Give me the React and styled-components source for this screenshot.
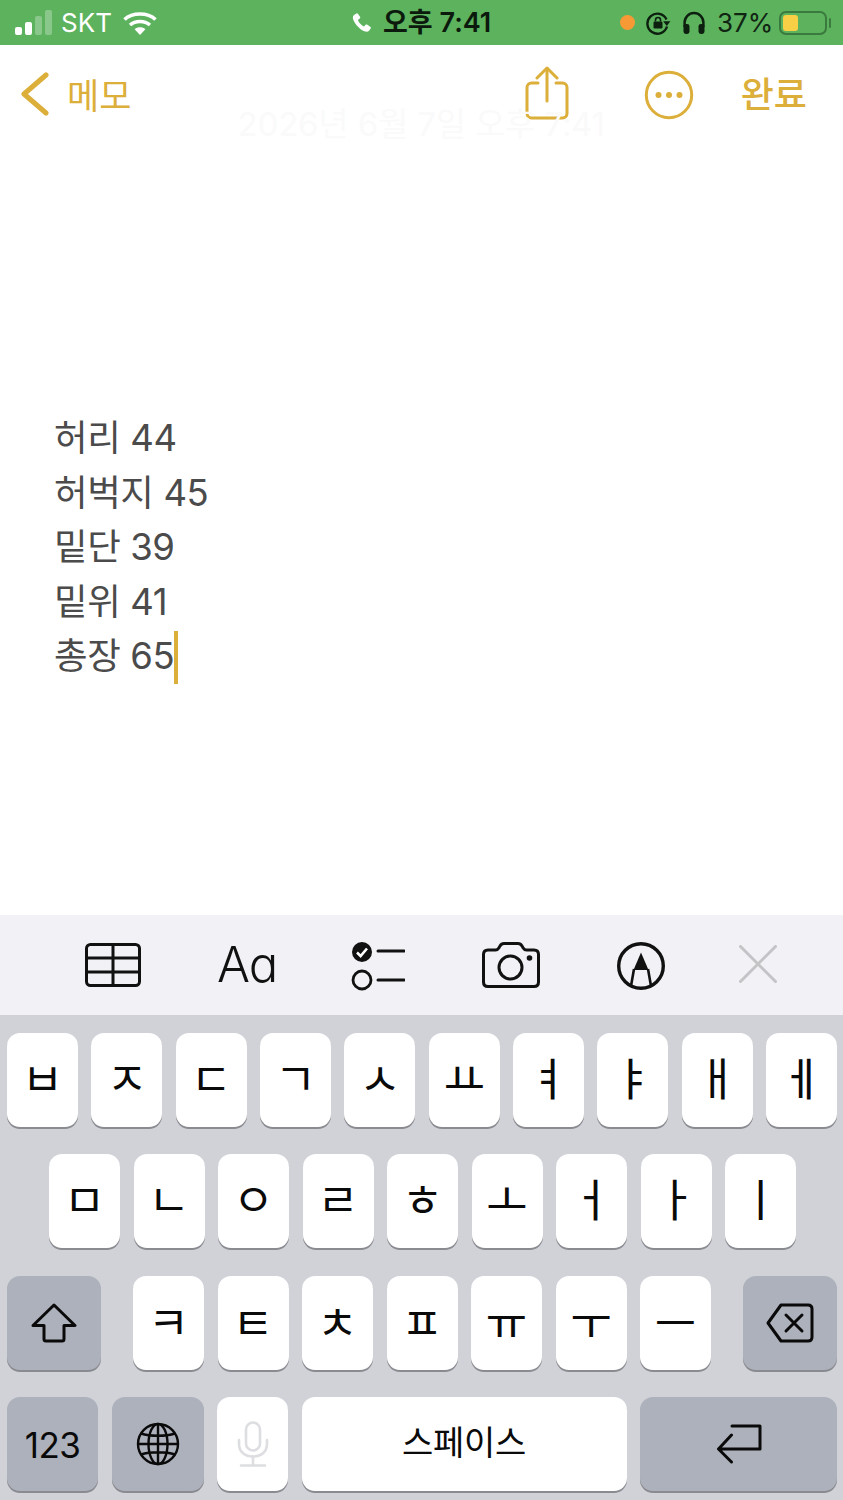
import React from "react";
import styled, { createGlobalStyle } from "styled-components";

const SANS = `Inter, "Noto Sans CJK KR", sans-serif`;
const GOLD = "#dcae3a";

const GlobalStyle = createGlobalStyle`
  html, body {
    margin: 0;
    padding: 0;
    background: #fff;
  }
`;

const Page = styled.div`
  width: 843px;
  height: 1500px;
  overflow: hidden;
  display: flex;
  flex-direction: column;
  font-family: ${SANS};
`;

const IconSvg = styled.svg`
  flex: none;
  margin-left: ${(p) => p.$ml ?? 0}px;
  margin-top: ${(p) => p.$mt ?? 0}px;
`;

/* status bar */
const StatusBar = styled.div`
  height: 45px;
  flex: none;
  box-sizing: border-box;
  padding-left: 15px;
  background: #5cb25d;
  display: grid;
  grid-template-columns: 336px 268px 1fr;
  align-items: center;
`;

const StatusGroup = styled.div`
  display: flex;
  align-items: center;
  gap: ${(p) => p.$gap}px;
`;

const Signal = styled.div`
  display: flex;
  align-items: flex-end;
  gap: 3px;
  height: 25px;
  margin-top: -1px;
`;

const SignalBar = styled.span`
  width: 7px;
  height: ${(p) => p.$h}px;
  border-radius: 2px;
  background: ${(p) => (p.$on ? "#ffffff" : "rgba(255,255,255,0.28)")};
`;

const Carrier = styled.span`
  font-size: 26px;
  color: #fff;
  line-height: 30px;
  margin-left: -2px;
`;

const Clock = styled.span`
  font-size: 27px;
  font-weight: 600;
  color: #0b1a0c;
  line-height: 30px;
  white-space: nowrap;
`;

const OrangeDot = styled.span`
  width: 15px;
  height: 15px;
  margin-left: 1px;
  border-radius: 50%;
  background: #f79a35;
`;

const Percent = styled.span`
  font-size: 26px;
  color: #102412;
  line-height: 30px;
`;

const Battery = styled.div`
  width: 48px;
  height: 24px;
  box-sizing: border-box;
  border: 2px solid #3b7a3e;
  border-radius: 7px;
  padding: 2px;
  margin-left: -5px;
  position: relative;

  &::after {
    content: "";
    position: absolute;
    right: -6px;
    top: 5px;
    width: 2px;
    height: 10px;
    border-radius: 1px;
    background: #3b7a3e;
  }
`;

const BatteryFill = styled.div`
  width: 15px;
  height: 100%;
  border-radius: 3px;
  background: #f9cf45;
`;

/* note area */
const Main = styled.div`
  height: 870px;
  flex: none;
  display: flex;
  flex-direction: column;
`;

const Nav = styled.div`
  height: 62px;
  flex: none;
  margin-top: 18px;
  box-sizing: border-box;
  padding: 0 36px 0 21px;
  display: flex;
  align-items: center;
`;

const BackText = styled.span`
  font-size: 35px;
  color: ${GOLD};
  margin-left: 16px;
  margin-top: 4px;
  line-height: 40px;
`;

const NavRight = styled.div`
  margin-left: auto;
  display: flex;
  align-items: center;
`;

const DoneText = styled.span`
  font-size: 36px;
  font-weight: 500;
  color: ${GOLD};
  line-height: 40px;
  margin-left: 47px;
  margin-top: 2px;
`;

const DateLine = styled.div`
  text-align: center;
  font-size: 32.7px;
  line-height: 36px;
  color: #fafafa;
  margin-top: -19px;
`;

const Note = styled.div`
  margin-top: 269px;
  padding-left: 54px;
`;

const NoteLine = styled.div`
  font-size: 36.5px;
  line-height: 54.6px;
  height: 54.6px;
  letter-spacing: -0.4px;
  color: #4b4b4b;
  white-space: nowrap;
`;

const Caret = styled.span`
  display: inline-block;
  width: 4px;
  height: 53px;
  vertical-align: -15px;
  background: ${GOLD};
`;

/* format toolbar */
const Toolbar = styled.div`
  height: 100px;
  flex: none;
  box-sizing: border-box;
  padding-left: 85px;
  background: #f2f2f6;
  display: flex;
  align-items: center;
`;

const FontButton = styled.span`
  font-size: 49px;
  font-weight: 300;
  line-height: 60px;
  width: 59px;
  margin-left: 76px;
  margin-right: 1px;
  letter-spacing: -1px;
  color: #111;
  font-feature-settings: "cv11";
  white-space: nowrap;
`;

/* keyboard */
const Keyboard = styled.div`
  flex: 1;
  box-sizing: border-box;
  padding: 18px 6px 0 7px;
  background: #d0d2d8;
  display: flex;
  flex-direction: column;
  gap: 27.3px;
`;

const KeyRow = styled.div`
  display: flex;
  gap: ${(p) => p.$gap ?? 13.35}px;
  padding-left: ${(p) => p.$inset ?? 0}px;
`;

const LetterGroup = styled.div`
  display: flex;
  gap: 13.5px;
  margin: 0 32px;
`;

const Key = styled.div`
  width: ${(p) => p.$w ?? 71}px;
  height: 94px;
  flex: none;
  border-radius: 13px;
  background: ${(p) => (p.$dark ? "#adb1bb" : "#ffffff")};
  box-shadow: 0 2px 0 #8a8b90;
  display: flex;
  align-items: center;
  justify-content: center;
  color: #0a0a0a;
  font-family: "Noto Sans CJK KR", sans-serif;
  line-height: 1;
`;

const Glyph = styled.span`
  font-size: 45px;
  margin-top: ${(p) => p.$mt ?? -8}px;
`;

const Digits = styled.span`
  font-family: ${SANS};
  font-size: 35px;
  font-weight: 400;
  letter-spacing: -0.5px;
  margin-top: 3px;
`;

const SpaceLabel = styled.span`
  font-size: 34px;
  letter-spacing: -0.3px;
  margin-top: -5px;
`;

const SignalIcon = () => (
  <Signal>
    <SignalBar $h={8} $on />
    <SignalBar $h={13} $on />
    <SignalBar $h={19} />
    <SignalBar $h={25} />
  </Signal>
);

const WifiIcon = () => (
  <IconSvg width="36" height="26" viewBox="0 0 36 26" $ml={-1}>
    <g fill="none" stroke="#fff" strokeWidth="3.6" strokeLinecap="butt">
      <path d="M2.5 9.5C10.5 2.2 25.5 2.2 33.5 9.5" />
      <path d="M8 15C13.5 10.3 22.5 10.3 28 15" />
    </g>
    <path d="M12.6 19.2C15.6 16.6 20.4 16.6 23.4 19.2L18 25Z" fill="#fff" />
  </IconSvg>
);

const PhoneIcon = () => (
  <IconSvg width="21" height="21" viewBox="0 0 24 24">
    <path
      fill="#fff"
      d="M6.2 1.6 3.4 3.4C1.9 4.5 1.8 6.7 2.7 9c1.8 4.6 7.6 11 12.6 12.9 2.3.9 4.3.7 5.6-.8l1.7-2.4c.4-.6.3-1.3-.3-1.7l-4-2.6c-.6-.4-1.2-.3-1.7.2l-1.3 1.6c-.3.3-.7.4-1 .2-2.4-1.3-5.2-4.4-6.2-6.8-.1-.4 0-.7.3-1l1.7-1.2c.6-.5.7-1.1.4-1.7L7.9 2c-.4-.6-1.1-.8-1.7-.4Z"
    />
  </IconSvg>
);

const RotationLockIcon = () => (
  <IconSvg width="25" height="24" viewBox="0 0 25 24">
    <path
      d="M20.5 8.5A10 10 0 1 0 21 15.5"
      fill="none"
      stroke="#0d1f0e"
      strokeWidth="2.4"
    />
    <path d="M17.2 10.2 24.4 10.2 20.8 15Z" fill="#0d1f0e" />
    <rect x="7.5" y="10.5" width="9" height="7" rx="1.2" fill="#0d1f0e" />
    <path d="M9.5 10.5V9a2.5 2.5 0 0 1 5 0v1.5" fill="none" stroke="#0d1f0e" strokeWidth="1.6" />
  </IconSvg>
);

const HeadphonesIcon = () => (
  <IconSvg width="24" height="24" viewBox="0 0 24 24">
    <path d="M2.6 16V11.5a9.4 9.4 0 0 1 18.8 0V16" fill="none" stroke="#0d1f0e" strokeWidth="2.5" />
    <rect x="1.5" y="13" width="6" height="10" rx="2.4" fill="#0d1f0e" />
    <rect x="16.5" y="13" width="6" height="10" rx="2.4" fill="#0d1f0e" />
  </IconSvg>
);

const ChevronIcon = () => (
  <IconSvg width="30" height="44" viewBox="0 0 30 44">
    <path
      d="M25 3 3 22 25 41"
      fill="none"
      stroke={GOLD}
      strokeWidth="5"
      strokeLinecap="round"
      strokeLinejoin="round"
    />
  </IconSvg>
);

const ShareIcon = () => (
  <IconSvg width="44" height="54" viewBox="0 0 44 54" $mt={-3}>
    <g fill="none" stroke={GOLD} strokeWidth="3" strokeLinecap="round" strokeLinejoin="round">
      <path d="M13 17H6.5A4.5 4.5 0 0 0 2 21.5V47.5A4.5 4.5 0 0 0 6.5 52H37.5A4.5 4.5 0 0 0 42 47.5V21.5A4.5 4.5 0 0 0 37.5 17H31" />
      <path d="M22 35V2.5" />
      <path d="M12 12 22 2 32 12" />
    </g>
  </IconSvg>
);

const MoreIcon = () => (
  <IconSvg width="50" height="50" viewBox="0 0 50 50" $ml={75} $mt={2}>
    <circle cx="25" cy="25" r="22.7" fill="none" stroke={GOLD} strokeWidth="3" />
    <circle cx="14.5" cy="25" r="3" fill={GOLD} />
    <circle cx="25" cy="25" r="3" fill={GOLD} />
    <circle cx="35.5" cy="25" r="3" fill={GOLD} />
  </IconSvg>
);

const TableIcon = () => (
  <IconSvg width="56" height="44" viewBox="0 0 56 44">
    <g fill="none" stroke="#111" strokeWidth="3">
      <rect x="1.5" y="1.5" width="53" height="41" rx="4" />
      <path d="M1.5 15H54.5M1.5 29H54.5M28 1.5V42.5" />
    </g>
  </IconSvg>
);

const ChecklistIcon = () => (
  <IconSvg width="54" height="50" viewBox="0 0 54 50" $ml={74} $mt={2}>
    <circle cx="11" cy="11" r="10" fill="#111" />
    <path d="M6 11.5 9.6 15 16 7.5" fill="none" stroke="#fff" strokeWidth="2.6" />
    <circle cx="11" cy="39" r="9" fill="none" stroke="#111" strokeWidth="2.8" />
    <path d="M27 10H53M27 39H53" stroke="#111" strokeWidth="3" strokeLinecap="round" />
  </IconSvg>
);

const CameraIcon = () => (
  <IconSvg width="58" height="46" viewBox="0 0 58 46" $ml={77}>
    <path
      d="M6 8H13.5C15 8 16 7.4 16.8 6L18 4C19 2.3 20 1.6 22 1.6H36C38 1.6 39 2.3 40 4L41.2 6C42 7.4 43 8 44.5 8H52C55 8 56.5 9.5 56.5 12.5V40C56.5 43 55 44.5 52 44.5H6C3 44.5 1.5 43 1.5 40V12.5C1.5 9.5 3 8 6 8Z"
      fill="none"
      stroke="#111"
      strokeWidth="3"
      strokeLinejoin="round"
    />
    <circle cx="28.5" cy="25.5" r="11.5" fill="none" stroke="#111" strokeWidth="3" />
    <circle cx="47.5" cy="16" r="2.8" fill="#111" />
  </IconSvg>
);

const MarkupIcon = () => (
  <IconSvg width="48" height="48" viewBox="0 0 48 48" $ml={77} $mt={1}>
    <circle cx="24" cy="24" r="22.3" fill="none" stroke="#111" strokeWidth="3.4" />
    <path d="M24 10.5 31.5 28H16.5Z" fill="#111" />
    <path d="M17 27 14 44M31 27 34 44" stroke="#111" strokeWidth="2.6" fill="none" />
  </IconSvg>
);

const CloseIcon = () => (
  <IconSvg width="38" height="38" viewBox="0 0 38 38" $ml={74} $mt={-2}>
    <path d="M1.5 1.5 36.5 36.5M36.5 1.5 1.5 36.5" stroke="#c4c4c6" strokeWidth="3" strokeLinecap="round" />
  </IconSvg>
);

const ShiftIcon = () => (
  <IconSvg width="46" height="40" viewBox="0 0 46 40">
    <path
      d="M23 2 44 22.5H33V36C33 37.2 32.3 38 31 38H15C13.7 38 13 37.2 13 36V22.5H2Z"
      fill="none"
      stroke="#0a0a0a"
      strokeWidth="3"
      strokeLinejoin="round"
    />
  </IconSvg>
);

const DeleteIcon = () => (
  <IconSvg width="48" height="40" viewBox="0 0 48 40">
    <path
      d="M15 2H42C44.8 2 46 3.4 46 6V34C46 36.6 44.8 38 42 38H15L2 20Z"
      fill="none"
      stroke="#0a0a0a"
      strokeWidth="3"
      strokeLinejoin="round"
    />
    <path d="M20 12 36 28M36 12 20 28" stroke="#0a0a0a" strokeWidth="3" strokeLinecap="round" />
  </IconSvg>
);

const GlobeIcon = () => (
  <IconSvg width="44" height="44" viewBox="0 0 44 44">
    <g fill="none" stroke="#0a0a0a" strokeWidth="2.4">
      <circle cx="22" cy="22" r="20" />
      <ellipse cx="22" cy="22" rx="9.5" ry="20" />
      <path d="M22 2V42M2 22H42M5 11.5C14 14.5 30 14.5 39 11.5M5 32.5C14 29.5 30 29.5 39 32.5" />
    </g>
  </IconSvg>
);

const MicIcon = () => (
  <IconSvg width="32" height="46" viewBox="0 0 32 46">
    <g fill="none" stroke="#dddee1" strokeWidth="2.6" strokeLinecap="round">
      <rect x="9" y="1.5" width="14" height="28" rx="7" />
      <path d="M2 19V23C2 31 8 35.5 16 35.5S30 31 30 23V19" />
      <path d="M16 35.5V44M4 44.5H28" />
    </g>
  </IconSvg>
);

const ReturnIcon = () => (
  <IconSvg width="46" height="40" viewBox="0 0 46 40">
    <path
      d="M16 2H44V25H3M15.5 11 2.5 25 15.5 38"
      fill="none"
      stroke="#0a0a0a"
      strokeWidth="3"
      strokeLinecap="round"
      strokeLinejoin="round"
    />
  </IconSvg>
);

const ROW_ONE = ["ㅂ", "ㅈ", "ㄷ", "ㄱ", "ㅅ", "ㅛ", "ㅕ", "ㅑ", "ㅐ", "ㅔ"];
const ROW_TWO = ["ㅁ", "ㄴ", "ㅇ", "ㄹ", "ㅎ", "ㅗ", "ㅓ", "ㅏ", "ㅣ"];
const ROW_THREE = ["ㅋ", "ㅌ", "ㅊ", "ㅍ", "ㅠ", "ㅜ", "ㅡ"];
const NOTE_LINES = ["허리 44", "허벅지 45", "밑단 39", "밑위 41"];

const App = () => (
  <Page>
    <GlobalStyle />
    <StatusBar>
      <StatusGroup $gap={11}>
        <SignalIcon />
        <Carrier>SKT</Carrier>
        <WifiIcon />
      </StatusGroup>
      <StatusGroup $gap={11}>
        <PhoneIcon />
        <Clock>오후 7:41</Clock>
      </StatusGroup>
      <StatusGroup $gap={11}>
        <OrangeDot />
        <RotationLockIcon />
        <HeadphonesIcon />
        <Percent>37%</Percent>
        <Battery>
          <BatteryFill />
        </Battery>
      </StatusGroup>
    </StatusBar>
    <Main>
      <Nav>
        <ChevronIcon />
        <BackText>메모</BackText>
        <NavRight>
          <ShareIcon />
          <MoreIcon />
          <DoneText>완료</DoneText>
        </NavRight>
      </Nav>
      <DateLine>2026년 6월 7일 오후 7:41</DateLine>
      <Note>
        {NOTE_LINES.map((line) => (
          <NoteLine key={line}>{line}</NoteLine>
        ))}
        <NoteLine>
          총장 65
          <Caret />
        </NoteLine>
      </Note>
    </Main>
    <Toolbar>
      <TableIcon />
      <FontButton>Aa</FontButton>
      <ChecklistIcon />
      <CameraIcon />
      <MarkupIcon />
      <CloseIcon />
    </Toolbar>
    <Keyboard>
      <KeyRow>
        {ROW_ONE.map((k) => (
          <Key key={k}>
            <Glyph>{k}</Glyph>
          </Key>
        ))}
      </KeyRow>
      <KeyRow $inset={42} $gap={13.5}>
        {ROW_TWO.map((k) => (
          <Key key={k}>
            <Glyph>{k}</Glyph>
          </Key>
        ))}
      </KeyRow>
      <KeyRow $gap={0}>
        <Key $w={94} $dark>
          <ShiftIcon />
        </Key>
        <LetterGroup>
          {ROW_THREE.map((k) => (
            <Key key={k}>
              <Glyph $mt={-5}>{k}</Glyph>
            </Key>
          ))}
        </LetterGroup>
        <Key $w={94} $dark>
          <DeleteIcon />
        </Key>
      </KeyRow>
      <KeyRow $gap={13.5}>
        <Key $w={91} $dark>
          <Digits>123</Digits>
        </Key>
        <Key $w={92} $dark>
          <GlobeIcon />
        </Key>
        <Key>
          <MicIcon />
        </Key>
        <Key $w={325}>
          <SpaceLabel>스페이스</SpaceLabel>
        </Key>
        <Key $w={197} $dark>
          <ReturnIcon />
        </Key>
      </KeyRow>
    </Keyboard>
  </Page>
);

export default App;
